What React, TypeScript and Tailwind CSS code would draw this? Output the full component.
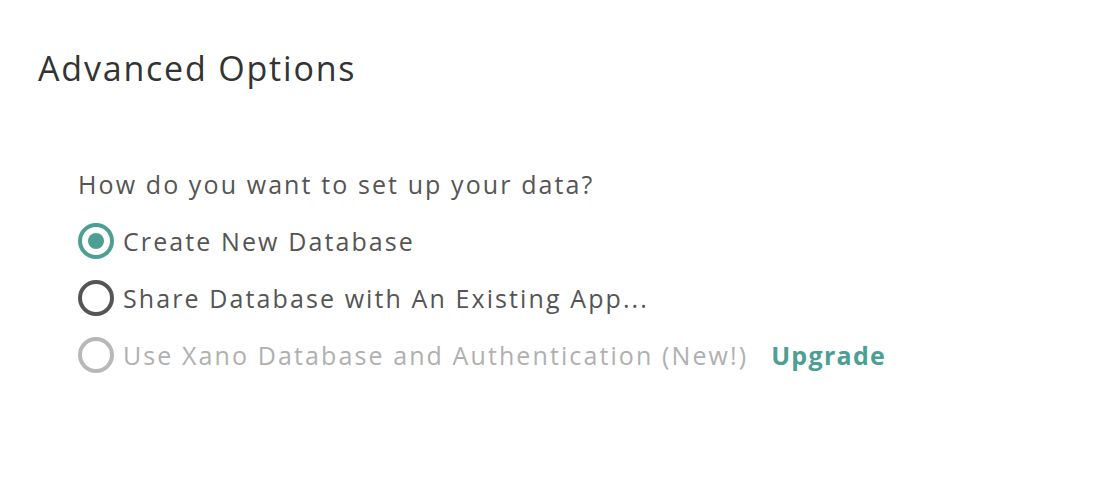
import React from "react";

const TEAL = "#4d9e93";

type Option = {
  label: string;
  state: "checked" | "idle" | "disabled";
};

const OPTIONS: Option[] = [
  { label: "Create New Database", state: "checked" },
  { label: "Share Database with An Existing App...", state: "idle" },
  { label: "Use Xano Database and Authentication (New!)", state: "disabled" },
];

function Radio({ state }: { state: Option["state"] }) {
  if (state === "checked") {
    return (
      <span className="flex h-[36px] w-[36px] shrink-0 items-center justify-center rounded-full border-[4px] border-[#4d9e93]">
        <span className="block h-[16px] w-[16px] rounded-full bg-[#4d9e93]" />
      </span>
    );
  }
  return (
    <span
      className={
        state === "idle"
          ? "block h-[36px] w-[36px] shrink-0 rounded-full border-[4px] border-[#555555]"
          : "block h-[36px] w-[36px] shrink-0 rounded-full border-[4px] border-[#b8b8b8]"
      }
    />
  );
}

export default function App() {
  return (
    <div
      className="h-[504px] w-[1116px] bg-white pl-[38px] pt-[44px]"
      style={{ fontFamily: '"Open Sans", "Noto Sans", sans-serif' }}
    >
      <h2 className="text-[34px] leading-[48px] tracking-[1.8px] text-[#333333]">Advanced Options</h2>
      <div className="ml-[40px] mt-[76px]">
        <p className="text-[25px] leading-[32px] tracking-[2.1px] text-[#555555]">
          How do you want to set up your data?
        </p>
        <div className="mt-[23px] flex flex-col gap-[21px]">
          {OPTIONS.map((o) => (
            <label key={o.label} className="flex items-center gap-[9px]">
              <Radio state={o.state} />
              <span
                className={
                  o.state === "disabled"
                    ? "text-[25px] leading-[36px] tracking-[2.1px] text-[#b0b0b0]"
                    : "text-[25px] leading-[36px] tracking-[2.1px] text-[#555555]"
                }
              >
                {o.label}
              </span>
              {o.state === "disabled" && (
                <span
                  className="ml-[14px] text-[25px] font-bold leading-[36px] tracking-[1.3px]"
                  style={{ color: TEAL }}
                >
                  Upgrade
                </span>
              )}
            </label>
          ))}
        </div>
      </div>
    </div>
  );
}
